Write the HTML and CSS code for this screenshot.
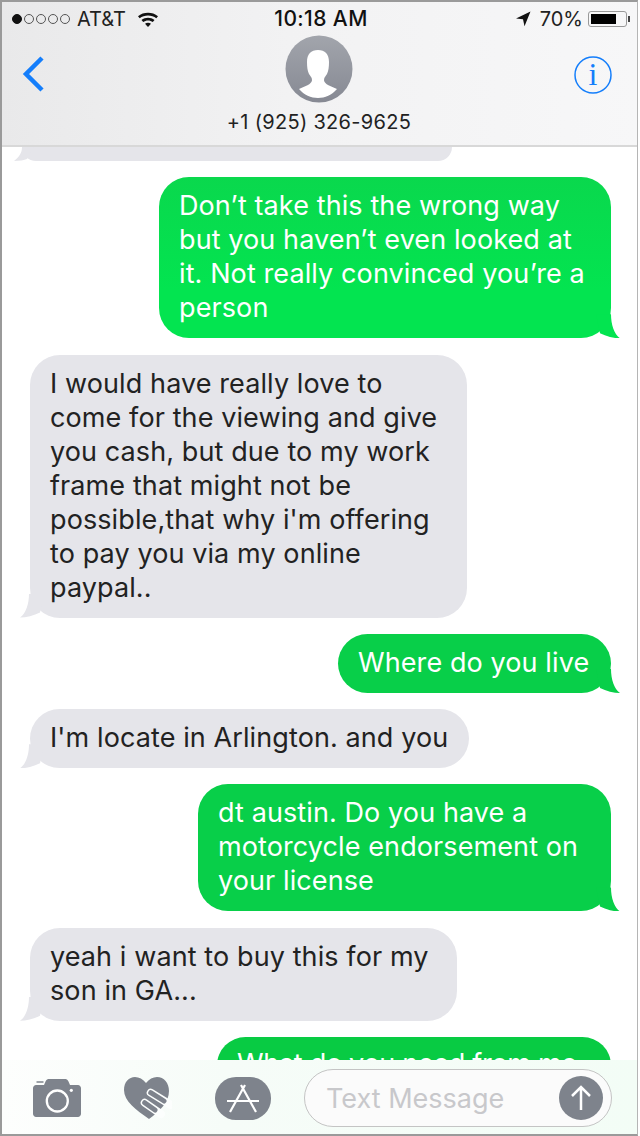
FILE: index.html
```html
<!DOCTYPE html>
<html lang="en">
<head>
  <meta charset="UTF-8" />
  <meta name="viewport" content="width=device-width, initial-scale=1.0"/>
  <title>Messages</title>
  <link rel="stylesheet" href="styles.css">
</head>
<body>
  <div class="phone">
    <!-- Status bar + contact -->
    <header class="top">
      <div class="status">
        <div class="status-left">
          <div class="signal"><i class="on"></i><i></i><i></i><i></i><i></i></div>
          <span>AT&amp;T</span>
          <svg class="wifi" width="22" height="16" viewBox="0 0 22 16">
            <path d="M1 5.2C6.6.6 15.400.6 21 5.2l-1.700 2C14.700 3.600 7.300 3.600 2.700 7.200z" fill="#111"/>
            <path d="M4.500 9c3.800-3 9.200-3 13 0l-1.700 2c-2.800-2.100-6.800-2.100-9.600 0z" fill="#111"/>
            <path d="M8 12.700c1.800-1.300 4.200-1.300 6 0L11 16z" fill="#111"/>
          </svg>
        </div>
        <div class="clock">10:18 AM</div>
        <div class="status-right">
          <svg class="arrow" width="16" height="16" viewBox="0 0 16 16"><path d="M15.500.500 1 7.500l7 .8 1.500 7z" fill="#111"/></svg>
          <span>70%</span>
          <div class="battery"><div class="charge"></div></div>
          <div class="nub"></div>
        </div>
      </div>
      <div class="nav">
        <svg class="back" width="24" height="36" viewBox="0 0 24 36"><path d="M20 2 4 18l16 16" fill="none" stroke="#147efb" stroke-width="4.500"/></svg>
        <div class="contact">
          <svg class="avatar" width="68" height="68" viewBox="0 0 68 68">
            <defs>
              <linearGradient id="ava" x1="0" y1="0" x2="0" y2="1">
                <stop offset="0" stop-color="#a2a5ac"/>
                <stop offset="1" stop-color="#868993"/>
              </linearGradient>
            </defs>
            <circle cx="34" cy="34" r="33.500" fill="url(#ava)"/>
            <path d="M33 15c-7 0-11 4-11 12 0 5 .5 9 2 12 1 2 3 3 3 6 0 3-3 5-13 9 5 6 12 9 19 9s14-3 19-9c-10-4-13-6-13-9 0-3 2-4 3-6 1.500-3 2-7 2-12 0-8-4-12-11-12z" fill="#fff"/>
          </svg>
          <div class="number">+1 (925) 326-9625</div>
        </div>
        <svg class="info" width="38" height="38" viewBox="0 0 38 38">
          <circle cx="19" cy="19" r="18" fill="none" stroke="#147efb" stroke-width="1.500"/>
          <text x="19" y="29" text-anchor="middle" class="info-i">i</text>
        </svg>
      </div>
    </header>

    <!-- Conversation -->
    <main class="thread">
      <div class="bubble them cut"></div>
      <div class="bubble me bright w452">Don’t take this the wrong way<br>but you haven’t even looked at<br>it. Not really convinced you’re a<br>person</div>
      <div class="bubble them w437">I would have really love to<br>come for the viewing and give<br>you cash, but due to my work<br>frame that might not be<br>possible,that why i'm offering<br>to pay you via my online<br>paypal..</div>
      <div class="bubble me w273">Where do you live</div>
      <div class="bubble them w439">I'm locate in Arlington. and you</div>
      <div class="bubble me w413">dt austin. Do you have a<br>motorcycle endorsement on<br>your license</div>
      <div class="bubble them w427">yeah i want to buy this for my<br>son in GA...</div>
      <div class="bubble me w394 last">What do you need from me</div>
    </main>

    <!-- Input bar -->
    <footer class="bar">
      <svg class="tool camera" width="48" height="38" viewBox="0 0 48 38">
        <path d="M3.500 3h7" stroke="#7e838c" stroke-width="1.500"/>
        <path d="M3 6h8l1.500-3.500C13.200 1 14.200 0 15.500 0h17c1.300 0 2.300 1 3 2.500L37 6h8c1.500 0 3 1.500 3 3v26c0 1.500-1.500 3-3 3H3c-1.500 0-3-1.500-3-3V9c0-1.500 1.500-3 3-3z" fill="#7e838c"/>
        <circle cx="24.300" cy="22" r="10.500" fill="none" stroke="#fff" stroke-width="2.300"/>
        <circle cx="38.300" cy="11.300" r="1.600" fill="#fff"/>
      </svg>
      <svg class="tool heart" width="48" height="43" viewBox="0 0 48 43">
        <path d="M22 6C19 2 15 0 11 0 5 0 0 5 0 13c0 11 12 20 25 29 11-8 20-17 20-28C45 6 40 0 33 0c-4 0-8 2-11 6z" fill="#7e838c"/>
        <path d="M26.700 15.700 47 28M20.700 25.700 37 37" fill="none" stroke="#fcfefd" stroke-width="8" stroke-linecap="round"/>
        <path d="M26.700 15.700 40 24M20.700 25.700 31 33" fill="none" stroke="#7e838c" stroke-width="5" stroke-linecap="round"/>
      </svg>
      <svg class="tool store" width="56" height="43" viewBox="0 0 56 43">
        <rect width="56" height="43" rx="21" fill="#7e838c"/>
        <path d="M30 8 15 35M26 8l15 27M12 24h32" fill="none" stroke="#fff" stroke-width="2.200"/>
      </svg>
      <div class="input">
        <span class="placeholder">Text Message</span>
        <div class="send">
          <svg width="24" height="26" viewBox="0 0 24 26"><path d="M12 25V2M3 11l9-9 9 9" fill="none" stroke="#fff" stroke-width="2.500"/></svg>
        </div>
      </div>
    </footer>
  </div>
</body>
</html>
```

FILE: styles.css
```css
html, body {
  margin: 0;
  padding: 0;
  height: 100%;
  background: white;
  overflow: hidden;
}

.phone {
  box-sizing: border-box;
  width: 638px;
  height: 1136px;
  display: flex;
  flex-direction: column;
  border: 2px solid #9a9a9a;
  border-right: 1px solid #b5b5b5;
  font-family: Inter, "Liberation Sans", sans-serif;
  color: #222;
}

/* top */
.top {
  flex: none;
  height: 145px;
  box-sizing: border-box;
  background: linear-gradient(90deg, #e9e9ea 0%, #f2f2f3 45%, #f7f7f8 100%);
  border-bottom: 2px solid #d8d8d8;
  position: relative;
  z-index: 2;
}

.status {
  display: flex;
  align-items: center;
  justify-content: space-between;
  height: 33px;
  padding: 0 7px 0 10px;
  font-size: 20px;
}

.status-left, .status-right {
  display: flex;
  align-items: center;
  width: 200px;
}

.status-right {
  justify-content: flex-end;
}

.signal {
  display: flex;
  gap: 2px;
  margin-right: 7px;
}

.signal i {
  box-sizing: border-box;
  width: 10px;
  height: 10px;
  border: 1px solid #555;
  border-radius: 50%;
}

.signal i.on {
  background: #111;
  border-color: #111;
}

.wifi { margin-left: 11px; }

.clock {
  font-size: 21px;
  font-weight: 500;
  letter-spacing: 0.4px;
  color: #111;
}

.arrow { margin-right: 9px; }

.battery {
  box-sizing: border-box;
  width: 39px;
  height: 16px;
  margin-left: 5px;
  padding: 2px;
  border: 1px solid #999;
  border-radius: 3px;
}

.charge {
  width: 25px;
  height: 10px;
  background: #000;
}

.nub {
  width: 2px;
  height: 6px;
  margin-left: 1px;
  background: #444;
}

.nav {
  display: flex;
  justify-content: space-between;
  padding: 0 25px 0 20px;
}

.back { margin-top: 21px; }

.contact {
  display: flex;
  flex-direction: column;
  align-items: center;
  margin-left: 18px;
}

.avatar { display: block; }

.number {
  margin-top: 6px;
  font-size: 20px;
  line-height: 26px;
  letter-spacing: 0.3px;
}

.info { margin-top: 21px; }

.info-i {
  font-family: "Liberation Serif", serif;
  font-size: 32px;
  fill: #147efb;
}

/* messages */
.thread {
  flex: 1;
  min-height: 0;
  overflow: hidden;
  display: flex;
  flex-direction: column;
  gap: 16.3px;
  padding: 0 26px 0 28px;
}

.bubble {
  position: relative;
  box-sizing: border-box;
  flex: none;
  padding: 12px 20px 13px;
  border-radius: 30px;
  font-size: 27px;
  line-height: 34px;
  letter-spacing: 0.1px;
}

.bubble::after {
  content: "";
  position: absolute;
  bottom: 0;
  width: 24px;
  height: 24px;
}

.w452 { width: 452px; }
.w437 { width: 437px; }
.w273 { width: 273px; }
.w439 { width: 439px; }
.w413 { width: 413px; }
.w427 { width: 427px; }
.w394 { width: 394px; }

.them {
  align-self: flex-start;
  background: #e5e5ea;
  color: #222;
}

.them::after {
  left: -10px;
  background: #e5e5ea;
  clip-path: path("M9 0C9 10 6 20 0 24 6 24 14 22 20 19L24 0z");
}

.me {
  align-self: flex-end;
  background: #08cf49;
  color: white;
}

.me::after {
  right: -9px;
  background: #08cf49;
  clip-path: path("M15 0C15 10 18 20 24 24 18 24 10 22 4 19L0 0z");
}

.me.bright { background: linear-gradient(#0ad84d, #03e450 70%); }
.me.bright::after { background: #03e450; }

.me.last {
  padding-top: 10px;
  background: #08cb43;
  letter-spacing: -0.3px;
}

.cut {
  height: 14px;
  width: 430px;
  padding: 0;
  border-radius: 0 0 26px 26px;
  margin-left: -8px;
}

.cut::after {
  left: -8px;
  width: 20px;
  height: 14px;
  clip-path: path("M8 0C8 6 5 10 0 14 6 14 10 13 13 12L20 0z");
}

/* input bar */
.bar {
  flex: none;
  height: 74px;
  box-sizing: border-box;
  display: flex;
  align-items: center;
  padding: 2px 25px 0 31px;
  background: linear-gradient(90deg, #fdfefd 0%, #f6fcf8 35%, #f3fdf6 100%);
  position: relative;
}

.tool { flex: none; }
.camera { margin-right: 43px; }
.heart { margin-right: 43px; }
.store { margin-right: 33px; }

.input {
  flex: 1;
  box-sizing: border-box;
  height: 58px;
  display: flex;
  align-items: center;
  justify-content: space-between;
  padding: 0 8px 0 21px;
  background: #fbfbfb;
  border: 1px solid #c4c4c4;
  border-radius: 29px;
}

.placeholder {
  font-size: 27px;
  color: #c8c8cb;
}

.send {
  width: 44px;
  height: 44px;
  display: flex;
  align-items: center;
  justify-content: center;
  background: #7e838c;
  border-radius: 50%;
}
```
